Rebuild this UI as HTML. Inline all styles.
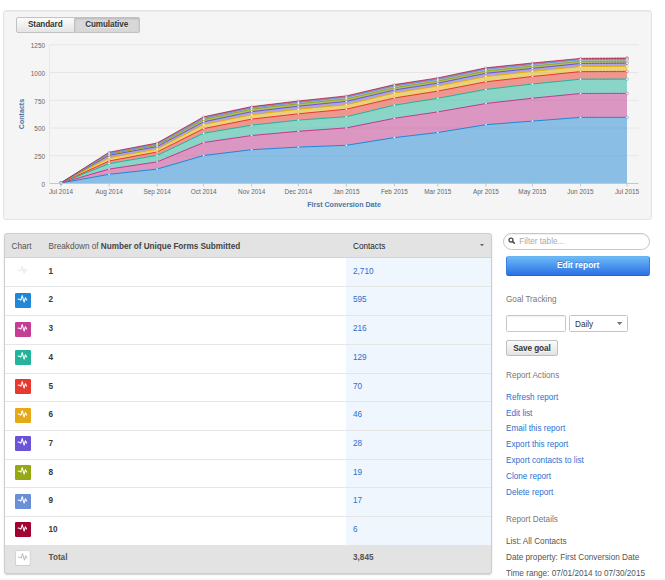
<!DOCTYPE html>
<html><head><meta charset="utf-8"><title>Report</title>
<style>
*{box-sizing:border-box;margin:0;padding:0}
html,body{width:665px;height:580px;background:#fff;overflow:hidden}
body{font-family:"Liberation Sans",Arial,sans-serif;font-size:8.2px;color:#555;position:relative}
.well{position:absolute;left:3px;top:10px;width:648.5px;height:209.5px;background:#f5f5f5;border:1px solid #e3e3e3;border-radius:3px;box-shadow:inset 0 1px 1px rgba(0,0,0,.04)}
.bg{position:absolute;left:16px;top:17px;height:15.5px;display:flex;font-weight:bold;color:#333;font-size:8.15px;letter-spacing:-0.08px;line-height:14.2px;text-shadow:0 1px 0 rgba(255,255,255,.7)}
.bg span{display:block;border:1px solid #c2c2c2;height:15.5px;text-align:center;background:linear-gradient(#fcfcfc,#e4e4e4)}
.bg .a{width:58.5px;border-radius:2px 0 0 2px}
.bg .b{width:65.3px;border-left:0;border-radius:0 2px 2px 0;background:#d8d8d8;box-shadow:inset 0 1px 2px rgba(0,0,0,.15)}
svg.chart{position:absolute;left:0;top:0}
.al{font-size:6.4px;fill:#666}
.at{font-size:7.1px;fill:#4a74a4;font-weight:bold}
.tbl{position:absolute;left:4px;top:232.6px;width:488px;height:341.4px;border-radius:3px;background:#fff;box-shadow:0 1px 1.5px rgba(0,0,0,.18);overflow:hidden}
.tb{position:absolute;left:0;top:0;width:100%;height:100%;border:0.8px solid #cdcdcd;border-radius:3px}
.th{position:absolute;left:0;top:0;width:100%;height:25.7px;background:#e3e3e3;border-bottom:1px solid #d4d4d4;line-height:28.4px;color:#555}
.th span{position:absolute;top:0}
.col{position:absolute;left:342px;top:25.5px;width:146px;height:287px;background:#eff6fe}
.row{position:absolute;left:0;width:100%;height:28.68px;border-bottom:1px solid #e6e6e6;line-height:26.6px}
.row span{position:absolute;top:0}
.ic{left:11.2px;top:5.4px !important;width:15.5px;height:15px;border-radius:1.2px;display:block;line-height:0}
.ic.tot{left:11px;top:5px !important;width:17px;height:17px}
.nm{left:44.5px;font-weight:bold;color:#3a3a3a}
.cv{left:349px;color:#2b6fd0}
.tr{position:absolute;left:0;top:312.3px;width:100%;height:29.5px;background:#e3e3e3;line-height:26.2px}
.tr span{position:absolute;top:0}
.side{position:absolute;left:506px;color:#555;line-height:10px;white-space:nowrap}
a{color:#2b6fd0;text-decoration:none}
</style></head><body>
<div class="well"></div>
<div class="bg"><span class="a">Standard</span><span class="b">Cumulative</span></div>
<svg class="chart" width="665" height="225" viewBox="0 0 665 225" font-family="Liberation Sans, Arial, sans-serif">
<path d="M49.5 155.75H638.5" stroke="#e6e6e6" stroke-width="1"/>
<path d="M49.5 128.00H638.5" stroke="#e6e6e6" stroke-width="1"/>
<path d="M49.5 100.25H638.5" stroke="#e6e6e6" stroke-width="1"/>
<path d="M49.5 72.50H638.5" stroke="#e6e6e6" stroke-width="1"/>
<path d="M49.5 44.75H638.5" stroke="#e6e6e6" stroke-width="1"/>
<path d="M49.5 45V183.5" stroke="#e8e8e8" stroke-width="1"/>
<path d="M61.0 183.0 L109.1 174.3 L157.1 169.1 L203.7 155.5 L251.7 149.7 L298.3 147.1 L346.3 145.3 L394.4 137.6 L437.8 132.5 L485.9 124.7 L532.4 121.1 L580.5 117.4 L627.0 117.4 L627.0 183.5 L580.5 183.5 L532.4 183.5 L485.9 183.5 L437.8 183.5 L394.4 183.5 L346.3 183.5 L298.3 183.5 L251.7 183.5 L203.7 183.5 L157.1 183.5 L109.1 183.5 L61.0 183.5Z" fill="#1f87d6" fill-opacity="0.5"/>
<path d="M61.0 183.0 L109.1 169.1 L157.1 161.9 L203.7 142.5 L251.7 135.5 L298.3 131.3 L346.3 127.9 L394.4 118.3 L437.8 111.9 L485.9 103.5 L532.4 98.2 L580.5 93.5 L627.0 93.4 L627.0 117.4 L580.5 117.4 L532.4 121.1 L485.9 124.7 L437.8 132.5 L394.4 137.6 L346.3 145.3 L298.3 147.1 L251.7 149.7 L203.7 155.5 L157.1 169.1 L109.1 174.3 L61.0 183.0Z" fill="#c2398f" fill-opacity="0.5"/>
<path d="M61.0 183.0 L109.1 163.6 L157.1 155.4 L203.7 133.2 L251.7 125.2 L298.3 120.1 L346.3 116.7 L394.4 105.2 L437.8 98.3 L485.9 89.4 L532.4 84.0 L580.5 79.2 L627.0 79.1 L627.0 93.4 L580.5 93.5 L532.4 98.2 L485.9 103.5 L437.8 111.9 L394.4 118.3 L346.3 127.9 L298.3 131.3 L251.7 135.5 L203.7 142.5 L157.1 161.9 L109.1 169.1 L61.0 183.0Z" fill="#22b39b" fill-opacity="0.5"/>
<path d="M61.0 182.9 L109.1 161.0 L157.1 152.0 L203.7 128.6 L251.7 119.1 L298.3 113.8 L346.3 109.2 L394.4 98.0 L437.8 91.1 L485.9 81.8 L532.4 76.5 L580.5 71.6 L627.0 71.4 L627.0 79.1 L580.5 79.2 L532.4 84.0 L485.9 89.4 L437.8 98.3 L394.4 105.2 L346.3 116.7 L298.3 120.1 L251.7 125.2 L203.7 133.2 L157.1 155.4 L109.1 163.6 L61.0 183.0Z" fill="#e8372c" fill-opacity="0.5"/>
<path d="M61.0 182.9 L109.1 157.8 L157.1 149.0 L203.7 124.4 L251.7 114.7 L298.3 109.2 L346.3 104.7 L394.4 92.9 L437.8 86.0 L485.9 76.5 L532.4 71.3 L580.5 66.5 L627.0 66.3 L627.0 71.4 L580.5 71.6 L532.4 76.5 L485.9 81.8 L437.8 91.1 L394.4 98.0 L346.3 109.2 L298.3 113.8 L251.7 119.1 L203.7 128.6 L157.1 152.0 L109.1 161.0 L61.0 182.9Z" fill="#e2b000" fill-opacity="0.5"/>
<path d="M61.0 182.9 L109.1 155.3 L157.1 146.6 L203.7 121.8 L251.7 111.7 L298.3 106.2 L346.3 101.4 L394.4 90.0 L437.8 83.2 L485.9 73.3 L532.4 68.4 L580.5 63.5 L627.0 63.2 L627.0 66.3 L580.5 66.5 L532.4 71.3 L485.9 76.5 L437.8 86.0 L394.4 92.9 L346.3 104.7 L298.3 109.2 L251.7 114.7 L203.7 124.4 L157.1 149.0 L109.1 157.8 L61.0 182.9Z" fill="#6a52d9" fill-opacity="0.5"/>
<path d="M61.0 182.8 L109.1 154.3 L157.1 145.1 L203.7 119.6 L251.7 109.2 L298.3 103.8 L346.3 99.0 L394.4 87.7 L437.8 81.1 L485.9 71.0 L532.4 66.1 L580.5 61.4 L627.0 61.1 L627.0 63.2 L580.5 63.5 L532.4 68.4 L485.9 73.3 L437.8 83.2 L394.4 90.0 L346.3 101.4 L298.3 106.2 L251.7 111.7 L203.7 121.8 L157.1 146.6 L109.1 155.3 L61.0 182.9Z" fill="#94a812" fill-opacity="0.68"/>
<path d="M61.0 182.8 L109.1 153.3 L157.1 144.0 L203.7 118.2 L251.7 107.8 L298.3 102.4 L346.3 97.2 L394.4 86.0 L437.8 79.4 L485.9 69.2 L532.4 64.4 L580.5 59.6 L627.0 59.3 L627.0 61.1 L580.5 61.4 L532.4 66.1 L485.9 71.0 L437.8 81.1 L394.4 87.7 L346.3 99.0 L298.3 103.8 L251.7 109.2 L203.7 119.6 L157.1 145.1 L109.1 154.3 L61.0 182.8Z" fill="#6a8fd9" fill-opacity="0.55"/>
<path d="M61.0 182.8 L109.1 152.2 L157.1 143.0 L203.7 116.8 L251.7 106.6 L298.3 101.0 L346.3 95.9 L394.4 84.6 L437.8 77.9 L485.9 67.8 L532.4 63.0 L580.5 58.4 L627.0 58.1 L627.0 59.3 L580.5 59.6 L532.4 64.4 L485.9 69.2 L437.8 79.4 L394.4 86.0 L346.3 97.2 L298.3 102.4 L251.7 107.8 L203.7 118.2 L157.1 144.0 L109.1 153.3 L61.0 182.8Z" fill="#a1002f" fill-opacity="0.5"/>
<path d="M61.0 183.0 L109.1 174.3 L157.1 169.1 L203.7 155.5 L251.7 149.7 L298.3 147.1 L346.3 145.3 L394.4 137.6 L437.8 132.5 L485.9 124.7 L532.4 121.1 L580.5 117.4" fill="none" stroke="#1f87d6" stroke-width="1.0" stroke-linejoin="round"/>
<path d="M580.5 117.4 L627.0 117.4" fill="none" stroke="#1f87d6" stroke-width="1.0" stroke-dasharray="2.1 0.7"/>
<path d="M580.5 117.4 L627.0 117.4" fill="none" stroke="#1f87d6" stroke-opacity="0.6" stroke-width="1.0"/>
<path d="M61.0 183.0 L109.1 169.1 L157.1 161.9 L203.7 142.5 L251.7 135.5 L298.3 131.3 L346.3 127.9 L394.4 118.3 L437.8 111.9 L485.9 103.5 L532.4 98.2 L580.5 93.5" fill="none" stroke="#c2398f" stroke-width="1.0" stroke-linejoin="round"/>
<path d="M580.5 93.5 L627.0 93.4" fill="none" stroke="#c2398f" stroke-width="1.0" stroke-dasharray="2.1 0.7"/>
<path d="M580.5 93.5 L627.0 93.4" fill="none" stroke="#c2398f" stroke-opacity="0.6" stroke-width="1.0"/>
<path d="M61.0 183.0 L109.1 163.6 L157.1 155.4 L203.7 133.2 L251.7 125.2 L298.3 120.1 L346.3 116.7 L394.4 105.2 L437.8 98.3 L485.9 89.4 L532.4 84.0 L580.5 79.2" fill="none" stroke="#22b39b" stroke-width="1.0" stroke-linejoin="round"/>
<path d="M580.5 79.2 L627.0 79.1" fill="none" stroke="#22b39b" stroke-width="1.0" stroke-dasharray="2.1 0.7"/>
<path d="M580.5 79.2 L627.0 79.1" fill="none" stroke="#22b39b" stroke-opacity="0.6" stroke-width="1.0"/>
<path d="M61.0 182.9 L109.1 161.0 L157.1 152.0 L203.7 128.6 L251.7 119.1 L298.3 113.8 L346.3 109.2 L394.4 98.0 L437.8 91.1 L485.9 81.8 L532.4 76.5 L580.5 71.6" fill="none" stroke="#e8372c" stroke-width="1.0" stroke-linejoin="round"/>
<path d="M580.5 71.6 L627.0 71.4" fill="none" stroke="#e8372c" stroke-width="1.0" stroke-dasharray="2.1 0.7"/>
<path d="M580.5 71.6 L627.0 71.4" fill="none" stroke="#e8372c" stroke-opacity="0.6" stroke-width="1.0"/>
<path d="M61.0 182.9 L109.1 157.8 L157.1 149.0 L203.7 124.4 L251.7 114.7 L298.3 109.2 L346.3 104.7 L394.4 92.9 L437.8 86.0 L485.9 76.5 L532.4 71.3 L580.5 66.5" fill="none" stroke="#e2b000" stroke-width="1.0" stroke-linejoin="round"/>
<path d="M580.5 66.5 L627.0 66.3" fill="none" stroke="#e2b000" stroke-width="1.0" stroke-dasharray="2.1 0.7"/>
<path d="M580.5 66.5 L627.0 66.3" fill="none" stroke="#e2b000" stroke-opacity="0.6" stroke-width="1.0"/>
<path d="M61.0 182.9 L109.1 155.3 L157.1 146.6 L203.7 121.8 L251.7 111.7 L298.3 106.2 L346.3 101.4 L394.4 90.0 L437.8 83.2 L485.9 73.3 L532.4 68.4 L580.5 63.5" fill="none" stroke="#6a52d9" stroke-width="1.0" stroke-linejoin="round"/>
<path d="M580.5 63.5 L627.0 63.2" fill="none" stroke="#6a52d9" stroke-width="1.0" stroke-dasharray="2.1 0.7"/>
<path d="M580.5 63.5 L627.0 63.2" fill="none" stroke="#6a52d9" stroke-opacity="0.6" stroke-width="1.0"/>
<path d="M61.0 182.8 L109.1 154.3 L157.1 145.1 L203.7 119.6 L251.7 109.2 L298.3 103.8 L346.3 99.0 L394.4 87.7 L437.8 81.1 L485.9 71.0 L532.4 66.1 L580.5 61.4" fill="none" stroke="#94a812" stroke-width="1.0" stroke-linejoin="round"/>
<path d="M580.5 61.4 L627.0 61.1" fill="none" stroke="#94a812" stroke-width="1.0" stroke-dasharray="2.1 0.7"/>
<path d="M580.5 61.4 L627.0 61.1" fill="none" stroke="#94a812" stroke-opacity="0.6" stroke-width="1.0"/>
<path d="M61.0 182.8 L109.1 153.3 L157.1 144.0 L203.7 118.2 L251.7 107.8 L298.3 102.4 L346.3 97.2 L394.4 86.0 L437.8 79.4 L485.9 69.2 L532.4 64.4 L580.5 59.6" fill="none" stroke="#6a8fd9" stroke-width="1.0" stroke-linejoin="round"/>
<path d="M580.5 59.6 L627.0 59.3" fill="none" stroke="#6a8fd9" stroke-width="1.0" stroke-dasharray="2.1 0.7"/>
<path d="M580.5 59.6 L627.0 59.3" fill="none" stroke="#6a8fd9" stroke-opacity="0.6" stroke-width="1.0"/>
<path d="M61.0 182.8 L109.1 152.2 L157.1 143.0 L203.7 116.8 L251.7 106.6 L298.3 101.0 L346.3 95.9 L394.4 84.6 L437.8 77.9 L485.9 67.8 L532.4 63.0 L580.5 58.4" fill="none" stroke="#a1002f" stroke-width="0.65" stroke-linejoin="round"/>
<path d="M580.5 58.4 L627.0 58.1" fill="none" stroke="#a1002f" stroke-width="0.65" stroke-dasharray="2.1 0.7"/>
<path d="M580.5 58.4 L627.0 58.1" fill="none" stroke="#a1002f" stroke-opacity="0.6" stroke-width="0.65"/>
<circle cx="61.0" cy="182.8" r="1.4" fill="#fff" fill-opacity="0.75" stroke="#a1002f" stroke-width="0.45"/>
<circle cx="109.1" cy="152.2" r="1.0" fill="#fff" stroke="#a1002f" stroke-width="0.3"/>
<circle cx="157.1" cy="143.0" r="1.0" fill="#fff" stroke="#a1002f" stroke-width="0.3"/>
<circle cx="203.7" cy="116.8" r="1.0" fill="#fff" stroke="#a1002f" stroke-width="0.3"/>
<circle cx="251.7" cy="106.6" r="1.0" fill="#fff" stroke="#a1002f" stroke-width="0.3"/>
<circle cx="298.3" cy="101.0" r="1.0" fill="#fff" stroke="#a1002f" stroke-width="0.3"/>
<circle cx="346.3" cy="95.9" r="1.0" fill="#fff" stroke="#a1002f" stroke-width="0.3"/>
<circle cx="394.4" cy="84.6" r="1.0" fill="#fff" stroke="#a1002f" stroke-width="0.3"/>
<circle cx="437.8" cy="77.9" r="1.0" fill="#fff" stroke="#a1002f" stroke-width="0.3"/>
<circle cx="485.9" cy="67.8" r="1.0" fill="#fff" stroke="#a1002f" stroke-width="0.3"/>
<circle cx="532.4" cy="63.0" r="1.0" fill="#fff" stroke="#a1002f" stroke-width="0.3"/>
<circle cx="580.5" cy="58.4" r="1.0" fill="#fff" stroke="#a1002f" stroke-width="0.3"/>
<circle cx="627.0" cy="58.1" r="1.4" fill="#fff" fill-opacity="0.75" stroke="#a1002f" stroke-width="0.45"/>
<circle cx="61.0" cy="182.8" r="1.4" fill="#fff" fill-opacity="0.75" stroke="#6a8fd9" stroke-width="0.45"/>
<circle cx="109.1" cy="153.3" r="1.0" fill="#fff" stroke="#6a8fd9" stroke-width="0.3"/>
<circle cx="157.1" cy="144.0" r="1.0" fill="#fff" stroke="#6a8fd9" stroke-width="0.3"/>
<circle cx="203.7" cy="118.2" r="1.0" fill="#fff" stroke="#6a8fd9" stroke-width="0.3"/>
<circle cx="251.7" cy="107.8" r="1.0" fill="#fff" stroke="#6a8fd9" stroke-width="0.3"/>
<circle cx="298.3" cy="102.4" r="1.0" fill="#fff" stroke="#6a8fd9" stroke-width="0.3"/>
<circle cx="346.3" cy="97.2" r="1.0" fill="#fff" stroke="#6a8fd9" stroke-width="0.3"/>
<circle cx="394.4" cy="86.0" r="1.0" fill="#fff" stroke="#6a8fd9" stroke-width="0.3"/>
<circle cx="437.8" cy="79.4" r="1.0" fill="#fff" stroke="#6a8fd9" stroke-width="0.3"/>
<circle cx="485.9" cy="69.2" r="1.0" fill="#fff" stroke="#6a8fd9" stroke-width="0.3"/>
<circle cx="532.4" cy="64.4" r="1.0" fill="#fff" stroke="#6a8fd9" stroke-width="0.3"/>
<circle cx="580.5" cy="59.6" r="1.0" fill="#fff" stroke="#6a8fd9" stroke-width="0.3"/>
<circle cx="627.0" cy="59.3" r="1.4" fill="#fff" fill-opacity="0.75" stroke="#6a8fd9" stroke-width="0.45"/>
<circle cx="61.0" cy="182.8" r="1.4" fill="#fff" fill-opacity="0.75" stroke="#94a812" stroke-width="0.45"/>
<circle cx="109.1" cy="154.3" r="1.0" fill="#fff" stroke="#94a812" stroke-width="0.3"/>
<circle cx="157.1" cy="145.1" r="1.0" fill="#fff" stroke="#94a812" stroke-width="0.3"/>
<circle cx="203.7" cy="119.6" r="1.0" fill="#fff" stroke="#94a812" stroke-width="0.3"/>
<circle cx="251.7" cy="109.2" r="1.0" fill="#fff" stroke="#94a812" stroke-width="0.3"/>
<circle cx="298.3" cy="103.8" r="1.0" fill="#fff" stroke="#94a812" stroke-width="0.3"/>
<circle cx="346.3" cy="99.0" r="1.0" fill="#fff" stroke="#94a812" stroke-width="0.3"/>
<circle cx="394.4" cy="87.7" r="1.0" fill="#fff" stroke="#94a812" stroke-width="0.3"/>
<circle cx="437.8" cy="81.1" r="1.0" fill="#fff" stroke="#94a812" stroke-width="0.3"/>
<circle cx="485.9" cy="71.0" r="1.0" fill="#fff" stroke="#94a812" stroke-width="0.3"/>
<circle cx="532.4" cy="66.1" r="1.0" fill="#fff" stroke="#94a812" stroke-width="0.3"/>
<circle cx="580.5" cy="61.4" r="1.0" fill="#fff" stroke="#94a812" stroke-width="0.3"/>
<circle cx="627.0" cy="61.1" r="1.4" fill="#fff" fill-opacity="0.75" stroke="#94a812" stroke-width="0.45"/>
<circle cx="61.0" cy="182.9" r="1.4" fill="#fff" fill-opacity="0.75" stroke="#6a52d9" stroke-width="0.45"/>
<circle cx="109.1" cy="155.3" r="1.0" fill="#fff" stroke="#6a52d9" stroke-width="0.3"/>
<circle cx="157.1" cy="146.6" r="1.0" fill="#fff" stroke="#6a52d9" stroke-width="0.3"/>
<circle cx="203.7" cy="121.8" r="1.0" fill="#fff" stroke="#6a52d9" stroke-width="0.3"/>
<circle cx="251.7" cy="111.7" r="1.0" fill="#fff" stroke="#6a52d9" stroke-width="0.3"/>
<circle cx="298.3" cy="106.2" r="1.0" fill="#fff" stroke="#6a52d9" stroke-width="0.3"/>
<circle cx="346.3" cy="101.4" r="1.0" fill="#fff" stroke="#6a52d9" stroke-width="0.3"/>
<circle cx="394.4" cy="90.0" r="1.0" fill="#fff" stroke="#6a52d9" stroke-width="0.3"/>
<circle cx="437.8" cy="83.2" r="1.0" fill="#fff" stroke="#6a52d9" stroke-width="0.3"/>
<circle cx="485.9" cy="73.3" r="1.0" fill="#fff" stroke="#6a52d9" stroke-width="0.3"/>
<circle cx="532.4" cy="68.4" r="1.0" fill="#fff" stroke="#6a52d9" stroke-width="0.3"/>
<circle cx="580.5" cy="63.5" r="1.0" fill="#fff" stroke="#6a52d9" stroke-width="0.3"/>
<circle cx="627.0" cy="63.2" r="1.4" fill="#fff" fill-opacity="0.75" stroke="#6a52d9" stroke-width="0.45"/>
<circle cx="61.0" cy="182.9" r="1.4" fill="#fff" fill-opacity="0.75" stroke="#e2b000" stroke-width="0.45"/>
<circle cx="109.1" cy="157.8" r="1.0" fill="#fff" stroke="#e2b000" stroke-width="0.3"/>
<circle cx="157.1" cy="149.0" r="1.0" fill="#fff" stroke="#e2b000" stroke-width="0.3"/>
<circle cx="203.7" cy="124.4" r="1.0" fill="#fff" stroke="#e2b000" stroke-width="0.3"/>
<circle cx="251.7" cy="114.7" r="1.0" fill="#fff" stroke="#e2b000" stroke-width="0.3"/>
<circle cx="298.3" cy="109.2" r="1.0" fill="#fff" stroke="#e2b000" stroke-width="0.3"/>
<circle cx="346.3" cy="104.7" r="1.0" fill="#fff" stroke="#e2b000" stroke-width="0.3"/>
<circle cx="394.4" cy="92.9" r="1.0" fill="#fff" stroke="#e2b000" stroke-width="0.3"/>
<circle cx="437.8" cy="86.0" r="1.0" fill="#fff" stroke="#e2b000" stroke-width="0.3"/>
<circle cx="485.9" cy="76.5" r="1.0" fill="#fff" stroke="#e2b000" stroke-width="0.3"/>
<circle cx="532.4" cy="71.3" r="1.0" fill="#fff" stroke="#e2b000" stroke-width="0.3"/>
<circle cx="580.5" cy="66.5" r="1.0" fill="#fff" stroke="#e2b000" stroke-width="0.3"/>
<circle cx="627.0" cy="66.3" r="1.4" fill="#fff" fill-opacity="0.75" stroke="#e2b000" stroke-width="0.45"/>
<circle cx="61.0" cy="182.9" r="1.4" fill="#fff" fill-opacity="0.75" stroke="#e8372c" stroke-width="0.45"/>
<circle cx="109.1" cy="161.0" r="1.0" fill="#fff" stroke="#e8372c" stroke-width="0.3"/>
<circle cx="157.1" cy="152.0" r="1.0" fill="#fff" stroke="#e8372c" stroke-width="0.3"/>
<circle cx="203.7" cy="128.6" r="1.0" fill="#fff" stroke="#e8372c" stroke-width="0.3"/>
<circle cx="251.7" cy="119.1" r="1.0" fill="#fff" stroke="#e8372c" stroke-width="0.3"/>
<circle cx="298.3" cy="113.8" r="1.0" fill="#fff" stroke="#e8372c" stroke-width="0.3"/>
<circle cx="346.3" cy="109.2" r="1.0" fill="#fff" stroke="#e8372c" stroke-width="0.3"/>
<circle cx="394.4" cy="98.0" r="1.0" fill="#fff" stroke="#e8372c" stroke-width="0.3"/>
<circle cx="437.8" cy="91.1" r="1.0" fill="#fff" stroke="#e8372c" stroke-width="0.3"/>
<circle cx="485.9" cy="81.8" r="1.0" fill="#fff" stroke="#e8372c" stroke-width="0.3"/>
<circle cx="532.4" cy="76.5" r="1.0" fill="#fff" stroke="#e8372c" stroke-width="0.3"/>
<circle cx="580.5" cy="71.6" r="1.0" fill="#fff" stroke="#e8372c" stroke-width="0.3"/>
<circle cx="627.0" cy="71.4" r="1.4" fill="#fff" fill-opacity="0.75" stroke="#e8372c" stroke-width="0.45"/>
<circle cx="61.0" cy="183.0" r="1.4" fill="#fff" fill-opacity="0.75" stroke="#22b39b" stroke-width="0.45"/>
<circle cx="109.1" cy="163.6" r="1.0" fill="#fff" stroke="#22b39b" stroke-width="0.3"/>
<circle cx="157.1" cy="155.4" r="1.0" fill="#fff" stroke="#22b39b" stroke-width="0.3"/>
<circle cx="203.7" cy="133.2" r="1.0" fill="#fff" stroke="#22b39b" stroke-width="0.3"/>
<circle cx="251.7" cy="125.2" r="1.0" fill="#fff" stroke="#22b39b" stroke-width="0.3"/>
<circle cx="298.3" cy="120.1" r="1.0" fill="#fff" stroke="#22b39b" stroke-width="0.3"/>
<circle cx="346.3" cy="116.7" r="1.0" fill="#fff" stroke="#22b39b" stroke-width="0.3"/>
<circle cx="394.4" cy="105.2" r="1.0" fill="#fff" stroke="#22b39b" stroke-width="0.3"/>
<circle cx="437.8" cy="98.3" r="1.0" fill="#fff" stroke="#22b39b" stroke-width="0.3"/>
<circle cx="485.9" cy="89.4" r="1.0" fill="#fff" stroke="#22b39b" stroke-width="0.3"/>
<circle cx="532.4" cy="84.0" r="1.0" fill="#fff" stroke="#22b39b" stroke-width="0.3"/>
<circle cx="580.5" cy="79.2" r="1.0" fill="#fff" stroke="#22b39b" stroke-width="0.3"/>
<circle cx="627.0" cy="79.1" r="1.4" fill="#fff" fill-opacity="0.75" stroke="#22b39b" stroke-width="0.45"/>
<circle cx="61.0" cy="183.0" r="1.4" fill="#fff" fill-opacity="0.75" stroke="#c2398f" stroke-width="0.45"/>
<circle cx="109.1" cy="169.1" r="1.0" fill="#fff" stroke="#c2398f" stroke-width="0.3"/>
<circle cx="157.1" cy="161.9" r="1.0" fill="#fff" stroke="#c2398f" stroke-width="0.3"/>
<circle cx="203.7" cy="142.5" r="1.0" fill="#fff" stroke="#c2398f" stroke-width="0.3"/>
<circle cx="251.7" cy="135.5" r="1.0" fill="#fff" stroke="#c2398f" stroke-width="0.3"/>
<circle cx="298.3" cy="131.3" r="1.0" fill="#fff" stroke="#c2398f" stroke-width="0.3"/>
<circle cx="346.3" cy="127.9" r="1.0" fill="#fff" stroke="#c2398f" stroke-width="0.3"/>
<circle cx="394.4" cy="118.3" r="1.0" fill="#fff" stroke="#c2398f" stroke-width="0.3"/>
<circle cx="437.8" cy="111.9" r="1.0" fill="#fff" stroke="#c2398f" stroke-width="0.3"/>
<circle cx="485.9" cy="103.5" r="1.0" fill="#fff" stroke="#c2398f" stroke-width="0.3"/>
<circle cx="532.4" cy="98.2" r="1.0" fill="#fff" stroke="#c2398f" stroke-width="0.3"/>
<circle cx="580.5" cy="93.5" r="1.0" fill="#fff" stroke="#c2398f" stroke-width="0.3"/>
<circle cx="627.0" cy="93.4" r="1.4" fill="#fff" fill-opacity="0.75" stroke="#c2398f" stroke-width="0.45"/>
<circle cx="61.0" cy="183.0" r="1.4" fill="#fff" fill-opacity="0.75" stroke="#1f87d6" stroke-width="0.45"/>
<circle cx="109.1" cy="174.3" r="1.0" fill="#fff" stroke="#1f87d6" stroke-width="0.3"/>
<circle cx="157.1" cy="169.1" r="1.0" fill="#fff" stroke="#1f87d6" stroke-width="0.3"/>
<circle cx="203.7" cy="155.5" r="1.0" fill="#fff" stroke="#1f87d6" stroke-width="0.3"/>
<circle cx="251.7" cy="149.7" r="1.0" fill="#fff" stroke="#1f87d6" stroke-width="0.3"/>
<circle cx="298.3" cy="147.1" r="1.0" fill="#fff" stroke="#1f87d6" stroke-width="0.3"/>
<circle cx="346.3" cy="145.3" r="1.0" fill="#fff" stroke="#1f87d6" stroke-width="0.3"/>
<circle cx="394.4" cy="137.6" r="1.0" fill="#fff" stroke="#1f87d6" stroke-width="0.3"/>
<circle cx="437.8" cy="132.5" r="1.0" fill="#fff" stroke="#1f87d6" stroke-width="0.3"/>
<circle cx="485.9" cy="124.7" r="1.0" fill="#fff" stroke="#1f87d6" stroke-width="0.3"/>
<circle cx="532.4" cy="121.1" r="1.0" fill="#fff" stroke="#1f87d6" stroke-width="0.3"/>
<circle cx="580.5" cy="117.4" r="1.0" fill="#fff" stroke="#1f87d6" stroke-width="0.3"/>
<circle cx="627.0" cy="117.4" r="1.4" fill="#fff" fill-opacity="0.75" stroke="#1f87d6" stroke-width="0.45"/>
<path d="M49.5 183.5H638.5" stroke="#c0c8d0" stroke-width="1"/>
<path d="M61.0 183.5V186.5" stroke="#c0c8d0" stroke-width="1"/>
<path d="M109.1 183.5V186.5" stroke="#c0c8d0" stroke-width="1"/>
<path d="M157.1 183.5V186.5" stroke="#c0c8d0" stroke-width="1"/>
<path d="M203.7 183.5V186.5" stroke="#c0c8d0" stroke-width="1"/>
<path d="M251.7 183.5V186.5" stroke="#c0c8d0" stroke-width="1"/>
<path d="M298.3 183.5V186.5" stroke="#c0c8d0" stroke-width="1"/>
<path d="M346.3 183.5V186.5" stroke="#c0c8d0" stroke-width="1"/>
<path d="M394.4 183.5V186.5" stroke="#c0c8d0" stroke-width="1"/>
<path d="M437.8 183.5V186.5" stroke="#c0c8d0" stroke-width="1"/>
<path d="M485.9 183.5V186.5" stroke="#c0c8d0" stroke-width="1"/>
<path d="M532.4 183.5V186.5" stroke="#c0c8d0" stroke-width="1"/>
<path d="M580.5 183.5V186.5" stroke="#c0c8d0" stroke-width="1"/>
<path d="M627.0 183.5V186.5" stroke="#c0c8d0" stroke-width="1"/>
<text x="45" y="186.8" text-anchor="end" class="al">0</text>
<text x="45" y="159.1" text-anchor="end" class="al">250</text>
<text x="45" y="131.3" text-anchor="end" class="al">500</text>
<text x="45" y="103.5" text-anchor="end" class="al">750</text>
<text x="45" y="75.8" text-anchor="end" class="al">1000</text>
<text x="45" y="48.0" text-anchor="end" class="al">1250</text>
<text x="61.0" y="194" text-anchor="middle" class="al">Jul 2014</text>
<text x="109.1" y="194" text-anchor="middle" class="al">Aug 2014</text>
<text x="157.1" y="194" text-anchor="middle" class="al">Sep 2014</text>
<text x="203.7" y="194" text-anchor="middle" class="al">Oct 2014</text>
<text x="251.7" y="194" text-anchor="middle" class="al">Nov 2014</text>
<text x="298.3" y="194" text-anchor="middle" class="al">Dec 2014</text>
<text x="346.3" y="194" text-anchor="middle" class="al">Jan 2015</text>
<text x="394.4" y="194" text-anchor="middle" class="al">Feb 2015</text>
<text x="437.8" y="194" text-anchor="middle" class="al">Mar 2015</text>
<text x="485.9" y="194" text-anchor="middle" class="al">Apr 2015</text>
<text x="532.4" y="194" text-anchor="middle" class="al">May 2015</text>
<text x="580.5" y="194" text-anchor="middle" class="al">Jun 2015</text>
<text x="627.0" y="194" text-anchor="middle" class="al">Jul 2015</text>
<text x="344" y="207.1" text-anchor="middle" class="at">First Conversion Date</text>
<text transform="translate(23.8 114) rotate(-90)" text-anchor="middle" class="at">Contacts</text>
</svg>
<div class="tbl">
<div class="th"><span style="left:7.5px">Chart</span><span style="left:44.5px" id="bh">Breakdown of <b style="color:#444;letter-spacing:-0.04px">Number of Unique Forms Submitted</b></span><span style="left:349px;color:#222">Contacts</span><svg style="position:absolute;left:476px;top:11.4px" width="4" height="2.4" viewBox="0 0 4 2.4"><path d="M0 0H4L2 2.4Z" fill="#666"/></svg></div>
<div class="col"></div>
<div class="row" style="top:26.20px"><span class="ic"><svg viewBox="0 0 15.5 15" width="15.5" height="15"><path d="M3.1 6.1L5.3 6.6L5.9 7.2L7.2 2.6L9.1 9.2L10.4 4.7L11.6 7.1" fill="none" stroke="#e4e4e4" stroke-width="0.9" stroke-linejoin="round" stroke-linecap="round"/></svg></span><span class="nm">1</span><span class="cv">2,710</span></div>
<div class="row" style="top:54.88px"><span class="ic" style="background:#1f87d6"><svg viewBox="0 0 15.5 15" width="15.5" height="15"><path d="M3.1 6.1L5.3 6.6L5.9 7.2L7.2 2.6L9.1 9.2L10.4 4.7L11.6 7.1" fill="none" stroke="#fff" stroke-width="1.05" stroke-linejoin="round" stroke-linecap="round"/><circle cx="3.1" cy="10.5" r="0.45" fill="#fff" opacity="0.16"/><circle cx="5.3" cy="10.5" r="0.45" fill="#fff" opacity="0.16"/><circle cx="11.3" cy="10.5" r="0.45" fill="#fff" opacity="0.16"/><circle cx="7.2" cy="11.4" r="0.45" fill="#fff" opacity="0.16"/><circle cx="5.3" cy="12.5" r="0.45" fill="#fff" opacity="0.16"/><circle cx="9.3" cy="12.5" r="0.45" fill="#fff" opacity="0.16"/><circle cx="3.1" cy="13.5" r="0.45" fill="#fff" opacity="0.16"/><circle cx="7.2" cy="13.5" r="0.45" fill="#fff" opacity="0.16"/><circle cx="11.3" cy="13.5" r="0.45" fill="#fff" opacity="0.16"/></svg></span><span class="nm">2</span><span class="cv">595</span></div>
<div class="row" style="top:83.56px"><span class="ic" style="background:#c43d93"><svg viewBox="0 0 15.5 15" width="15.5" height="15"><path d="M3.1 6.1L5.3 6.6L5.9 7.2L7.2 2.6L9.1 9.2L10.4 4.7L11.6 7.1" fill="none" stroke="#fff" stroke-width="1.05" stroke-linejoin="round" stroke-linecap="round"/><circle cx="3.1" cy="10.5" r="0.45" fill="#fff" opacity="0.16"/><circle cx="5.3" cy="10.5" r="0.45" fill="#fff" opacity="0.16"/><circle cx="11.3" cy="10.5" r="0.45" fill="#fff" opacity="0.16"/><circle cx="7.2" cy="11.4" r="0.45" fill="#fff" opacity="0.16"/><circle cx="5.3" cy="12.5" r="0.45" fill="#fff" opacity="0.16"/><circle cx="9.3" cy="12.5" r="0.45" fill="#fff" opacity="0.16"/><circle cx="3.1" cy="13.5" r="0.45" fill="#fff" opacity="0.16"/><circle cx="7.2" cy="13.5" r="0.45" fill="#fff" opacity="0.16"/><circle cx="11.3" cy="13.5" r="0.45" fill="#fff" opacity="0.16"/></svg></span><span class="nm">3</span><span class="cv">216</span></div>
<div class="row" style="top:112.24px"><span class="ic" style="background:#22b39b"><svg viewBox="0 0 15.5 15" width="15.5" height="15"><path d="M3.1 6.1L5.3 6.6L5.9 7.2L7.2 2.6L9.1 9.2L10.4 4.7L11.6 7.1" fill="none" stroke="#fff" stroke-width="1.05" stroke-linejoin="round" stroke-linecap="round"/><circle cx="3.1" cy="10.5" r="0.45" fill="#fff" opacity="0.16"/><circle cx="5.3" cy="10.5" r="0.45" fill="#fff" opacity="0.16"/><circle cx="11.3" cy="10.5" r="0.45" fill="#fff" opacity="0.16"/><circle cx="7.2" cy="11.4" r="0.45" fill="#fff" opacity="0.16"/><circle cx="5.3" cy="12.5" r="0.45" fill="#fff" opacity="0.16"/><circle cx="9.3" cy="12.5" r="0.45" fill="#fff" opacity="0.16"/><circle cx="3.1" cy="13.5" r="0.45" fill="#fff" opacity="0.16"/><circle cx="7.2" cy="13.5" r="0.45" fill="#fff" opacity="0.16"/><circle cx="11.3" cy="13.5" r="0.45" fill="#fff" opacity="0.16"/></svg></span><span class="nm">4</span><span class="cv">129</span></div>
<div class="row" style="top:140.92px"><span class="ic" style="background:#e8372c"><svg viewBox="0 0 15.5 15" width="15.5" height="15"><path d="M3.1 6.1L5.3 6.6L5.9 7.2L7.2 2.6L9.1 9.2L10.4 4.7L11.6 7.1" fill="none" stroke="#fff" stroke-width="1.05" stroke-linejoin="round" stroke-linecap="round"/><circle cx="3.1" cy="10.5" r="0.45" fill="#fff" opacity="0.16"/><circle cx="5.3" cy="10.5" r="0.45" fill="#fff" opacity="0.16"/><circle cx="11.3" cy="10.5" r="0.45" fill="#fff" opacity="0.16"/><circle cx="7.2" cy="11.4" r="0.45" fill="#fff" opacity="0.16"/><circle cx="5.3" cy="12.5" r="0.45" fill="#fff" opacity="0.16"/><circle cx="9.3" cy="12.5" r="0.45" fill="#fff" opacity="0.16"/><circle cx="3.1" cy="13.5" r="0.45" fill="#fff" opacity="0.16"/><circle cx="7.2" cy="13.5" r="0.45" fill="#fff" opacity="0.16"/><circle cx="11.3" cy="13.5" r="0.45" fill="#fff" opacity="0.16"/></svg></span><span class="nm">5</span><span class="cv">70</span></div>
<div class="row" style="top:169.60px"><span class="ic" style="background:#e6a817"><svg viewBox="0 0 15.5 15" width="15.5" height="15"><path d="M3.1 6.1L5.3 6.6L5.9 7.2L7.2 2.6L9.1 9.2L10.4 4.7L11.6 7.1" fill="none" stroke="#fff" stroke-width="1.05" stroke-linejoin="round" stroke-linecap="round"/><circle cx="3.1" cy="10.5" r="0.45" fill="#fff" opacity="0.16"/><circle cx="5.3" cy="10.5" r="0.45" fill="#fff" opacity="0.16"/><circle cx="11.3" cy="10.5" r="0.45" fill="#fff" opacity="0.16"/><circle cx="7.2" cy="11.4" r="0.45" fill="#fff" opacity="0.16"/><circle cx="5.3" cy="12.5" r="0.45" fill="#fff" opacity="0.16"/><circle cx="9.3" cy="12.5" r="0.45" fill="#fff" opacity="0.16"/><circle cx="3.1" cy="13.5" r="0.45" fill="#fff" opacity="0.16"/><circle cx="7.2" cy="13.5" r="0.45" fill="#fff" opacity="0.16"/><circle cx="11.3" cy="13.5" r="0.45" fill="#fff" opacity="0.16"/></svg></span><span class="nm">6</span><span class="cv">46</span></div>
<div class="row" style="top:198.28px"><span class="ic" style="background:#6a52d9"><svg viewBox="0 0 15.5 15" width="15.5" height="15"><path d="M3.1 6.1L5.3 6.6L5.9 7.2L7.2 2.6L9.1 9.2L10.4 4.7L11.6 7.1" fill="none" stroke="#fff" stroke-width="1.05" stroke-linejoin="round" stroke-linecap="round"/><circle cx="3.1" cy="10.5" r="0.45" fill="#fff" opacity="0.16"/><circle cx="5.3" cy="10.5" r="0.45" fill="#fff" opacity="0.16"/><circle cx="11.3" cy="10.5" r="0.45" fill="#fff" opacity="0.16"/><circle cx="7.2" cy="11.4" r="0.45" fill="#fff" opacity="0.16"/><circle cx="5.3" cy="12.5" r="0.45" fill="#fff" opacity="0.16"/><circle cx="9.3" cy="12.5" r="0.45" fill="#fff" opacity="0.16"/><circle cx="3.1" cy="13.5" r="0.45" fill="#fff" opacity="0.16"/><circle cx="7.2" cy="13.5" r="0.45" fill="#fff" opacity="0.16"/><circle cx="11.3" cy="13.5" r="0.45" fill="#fff" opacity="0.16"/></svg></span><span class="nm">7</span><span class="cv">28</span></div>
<div class="row" style="top:226.96px"><span class="ic" style="background:#94a812"><svg viewBox="0 0 15.5 15" width="15.5" height="15"><path d="M3.1 6.1L5.3 6.6L5.9 7.2L7.2 2.6L9.1 9.2L10.4 4.7L11.6 7.1" fill="none" stroke="#fff" stroke-width="1.05" stroke-linejoin="round" stroke-linecap="round"/><circle cx="3.1" cy="10.5" r="0.45" fill="#fff" opacity="0.16"/><circle cx="5.3" cy="10.5" r="0.45" fill="#fff" opacity="0.16"/><circle cx="11.3" cy="10.5" r="0.45" fill="#fff" opacity="0.16"/><circle cx="7.2" cy="11.4" r="0.45" fill="#fff" opacity="0.16"/><circle cx="5.3" cy="12.5" r="0.45" fill="#fff" opacity="0.16"/><circle cx="9.3" cy="12.5" r="0.45" fill="#fff" opacity="0.16"/><circle cx="3.1" cy="13.5" r="0.45" fill="#fff" opacity="0.16"/><circle cx="7.2" cy="13.5" r="0.45" fill="#fff" opacity="0.16"/><circle cx="11.3" cy="13.5" r="0.45" fill="#fff" opacity="0.16"/></svg></span><span class="nm">8</span><span class="cv">19</span></div>
<div class="row" style="top:255.64px"><span class="ic" style="background:#6a8fd9"><svg viewBox="0 0 15.5 15" width="15.5" height="15"><path d="M3.1 6.1L5.3 6.6L5.9 7.2L7.2 2.6L9.1 9.2L10.4 4.7L11.6 7.1" fill="none" stroke="#fff" stroke-width="1.05" stroke-linejoin="round" stroke-linecap="round"/><circle cx="3.1" cy="10.5" r="0.45" fill="#fff" opacity="0.16"/><circle cx="5.3" cy="10.5" r="0.45" fill="#fff" opacity="0.16"/><circle cx="11.3" cy="10.5" r="0.45" fill="#fff" opacity="0.16"/><circle cx="7.2" cy="11.4" r="0.45" fill="#fff" opacity="0.16"/><circle cx="5.3" cy="12.5" r="0.45" fill="#fff" opacity="0.16"/><circle cx="9.3" cy="12.5" r="0.45" fill="#fff" opacity="0.16"/><circle cx="3.1" cy="13.5" r="0.45" fill="#fff" opacity="0.16"/><circle cx="7.2" cy="13.5" r="0.45" fill="#fff" opacity="0.16"/><circle cx="11.3" cy="13.5" r="0.45" fill="#fff" opacity="0.16"/></svg></span><span class="nm">9</span><span class="cv">17</span></div>
<div class="row" style="top:284.32px"><span class="ic" style="background:#a1002f"><svg viewBox="0 0 15.5 15" width="15.5" height="15"><path d="M3.1 6.1L5.3 6.6L5.9 7.2L7.2 2.6L9.1 9.2L10.4 4.7L11.6 7.1" fill="none" stroke="#fff" stroke-width="1.05" stroke-linejoin="round" stroke-linecap="round"/><circle cx="3.1" cy="10.5" r="0.45" fill="#fff" opacity="0.16"/><circle cx="5.3" cy="10.5" r="0.45" fill="#fff" opacity="0.16"/><circle cx="11.3" cy="10.5" r="0.45" fill="#fff" opacity="0.16"/><circle cx="7.2" cy="11.4" r="0.45" fill="#fff" opacity="0.16"/><circle cx="5.3" cy="12.5" r="0.45" fill="#fff" opacity="0.16"/><circle cx="9.3" cy="12.5" r="0.45" fill="#fff" opacity="0.16"/><circle cx="3.1" cy="13.5" r="0.45" fill="#fff" opacity="0.16"/><circle cx="7.2" cy="13.5" r="0.45" fill="#fff" opacity="0.16"/><circle cx="11.3" cy="13.5" r="0.45" fill="#fff" opacity="0.16"/></svg></span><span class="nm">10</span><span class="cv">6</span></div>
<div class="tr"><span class="ic tot"><svg width="17" height="17" viewBox="0 0 17 17"><rect x="0.6" y="1.0" width="14.6" height="15.0" rx="1.4" fill="#b4b4b4"/><rect x="0.6" y="0.6" width="14.6" height="14.9" rx="1.4" fill="#fff" stroke="#c8c8c8" stroke-width="0.6"/><path transform="translate(0.3 1.0)" d="M3.1 6.1L5.3 6.6L5.9 7.2L7.2 2.6L9.1 9.2L10.4 4.7L11.6 7.1" fill="none" stroke="#a8a8a8" stroke-width="0.8" stroke-linejoin="round" stroke-linecap="round"/></svg></span><span class="nm" style="color:#555">Total</span><span class="cv" style="color:#555;font-weight:bold">3,845</span></div>
<div class="tb"></div>
</div>
<div style="position:absolute;left:503.2px;top:232.6px;width:146.8px;height:17.3px;border:1px solid #c6c6c6;border-radius:9px;background:#fff;box-shadow:inset 0 1px 1px rgba(0,0,0,.06)"></div>
<svg style="position:absolute;left:508.2px;top:237.4px" width="7.5" height="7.5" viewBox="0 0 7.5 7.5"><circle cx="3" cy="3" r="2" fill="none" stroke="#444" stroke-width="1.25"/><path d="M4.6 4.6L6.4 6.3" stroke="#444" stroke-width="1.5" stroke-linecap="round"/></svg>
<div class="side" style="left:519.3px;top:236.8px;color:#aaa" id="ft">Filter table...</div>
<div style="position:absolute;left:506px;top:256px;width:144.3px;height:20.2px;border-radius:2.5px;background:linear-gradient(#6cbaf7,#4a95ee 50%,#2c70e3);border:0.5px solid #3a80e0;border-top-color:#6ab4f2;border-bottom:1px solid #2a62d2;color:#fff;font-weight:bold;text-align:center;line-height:17.2px;font-size:8.4px;text-shadow:0 -1px 0 rgba(0,0,0,.2)" id="er">Edit report</div>
<div class="side" style="top:295.1px;color:#777" id="gt">Goal Tracking</div>
<div style="position:absolute;left:506px;top:315.3px;width:60px;height:16.5px;border:1px solid #c8c8c8;border-radius:1.5px;background:#fff;box-shadow:inset 0 1px 1px rgba(0,0,0,.06)"></div>
<div style="position:absolute;left:569.2px;top:315.3px;width:58.5px;height:16.5px;border:1px solid #c4c4c4;border-radius:1.5px;background:#fff;color:#333;line-height:18.4px;padding-left:4.8px">Daily<svg style="position:absolute;left:46.8px;top:6px" width="5.2" height="3.2" viewBox="0 0 5.2 3.2"><path d="M0 0H5.2L2.6 3.2Z" fill="#777"/></svg></div>
<div style="position:absolute;left:506px;top:340.4px;width:51.8px;height:15.6px;border:1px solid #bfbfbf;border-radius:2px;background:linear-gradient(#fbfbfb,#e2e2e2);color:#333;font-weight:bold;text-align:center;line-height:15.6px;letter-spacing:-0.1px;text-shadow:0 1px 0 rgba(255,255,255,.7)" id="sg">Save goal</div>
<div class="side" style="top:371.1px;color:#777">Report Actions</div>
<div class="side" style="top:393.2px"><a>Refresh report</a></div>
<div class="side" style="top:408.8px"><a>Edit list</a></div>
<div class="side" style="top:424.3px"><a>Email this report</a></div>
<div class="side" style="top:440.1px"><a>Export this report</a></div>
<div class="side" style="top:456.2px"><a id="ecl">Export contacts to list</a></div>
<div class="side" style="top:472.0px"><a>Clone report</a></div>
<div class="side" style="top:487.9px"><a>Delete report</a></div>
<div class="side" style="top:514.8px;color:#777">Report Details</div>
<div class="side" style="top:536.5px">List: All Contacts</div>
<div class="side" style="top:552.6px">Date property: First Conversion Date</div>
<div class="side" style="top:569.0px" id="trg">Time range: 07/01/2014 to 07/30/2015</div>
<div style="position:absolute;left:0;top:578px;width:665px;height:2px;background:#f9faf9"></div>
</body></html>
